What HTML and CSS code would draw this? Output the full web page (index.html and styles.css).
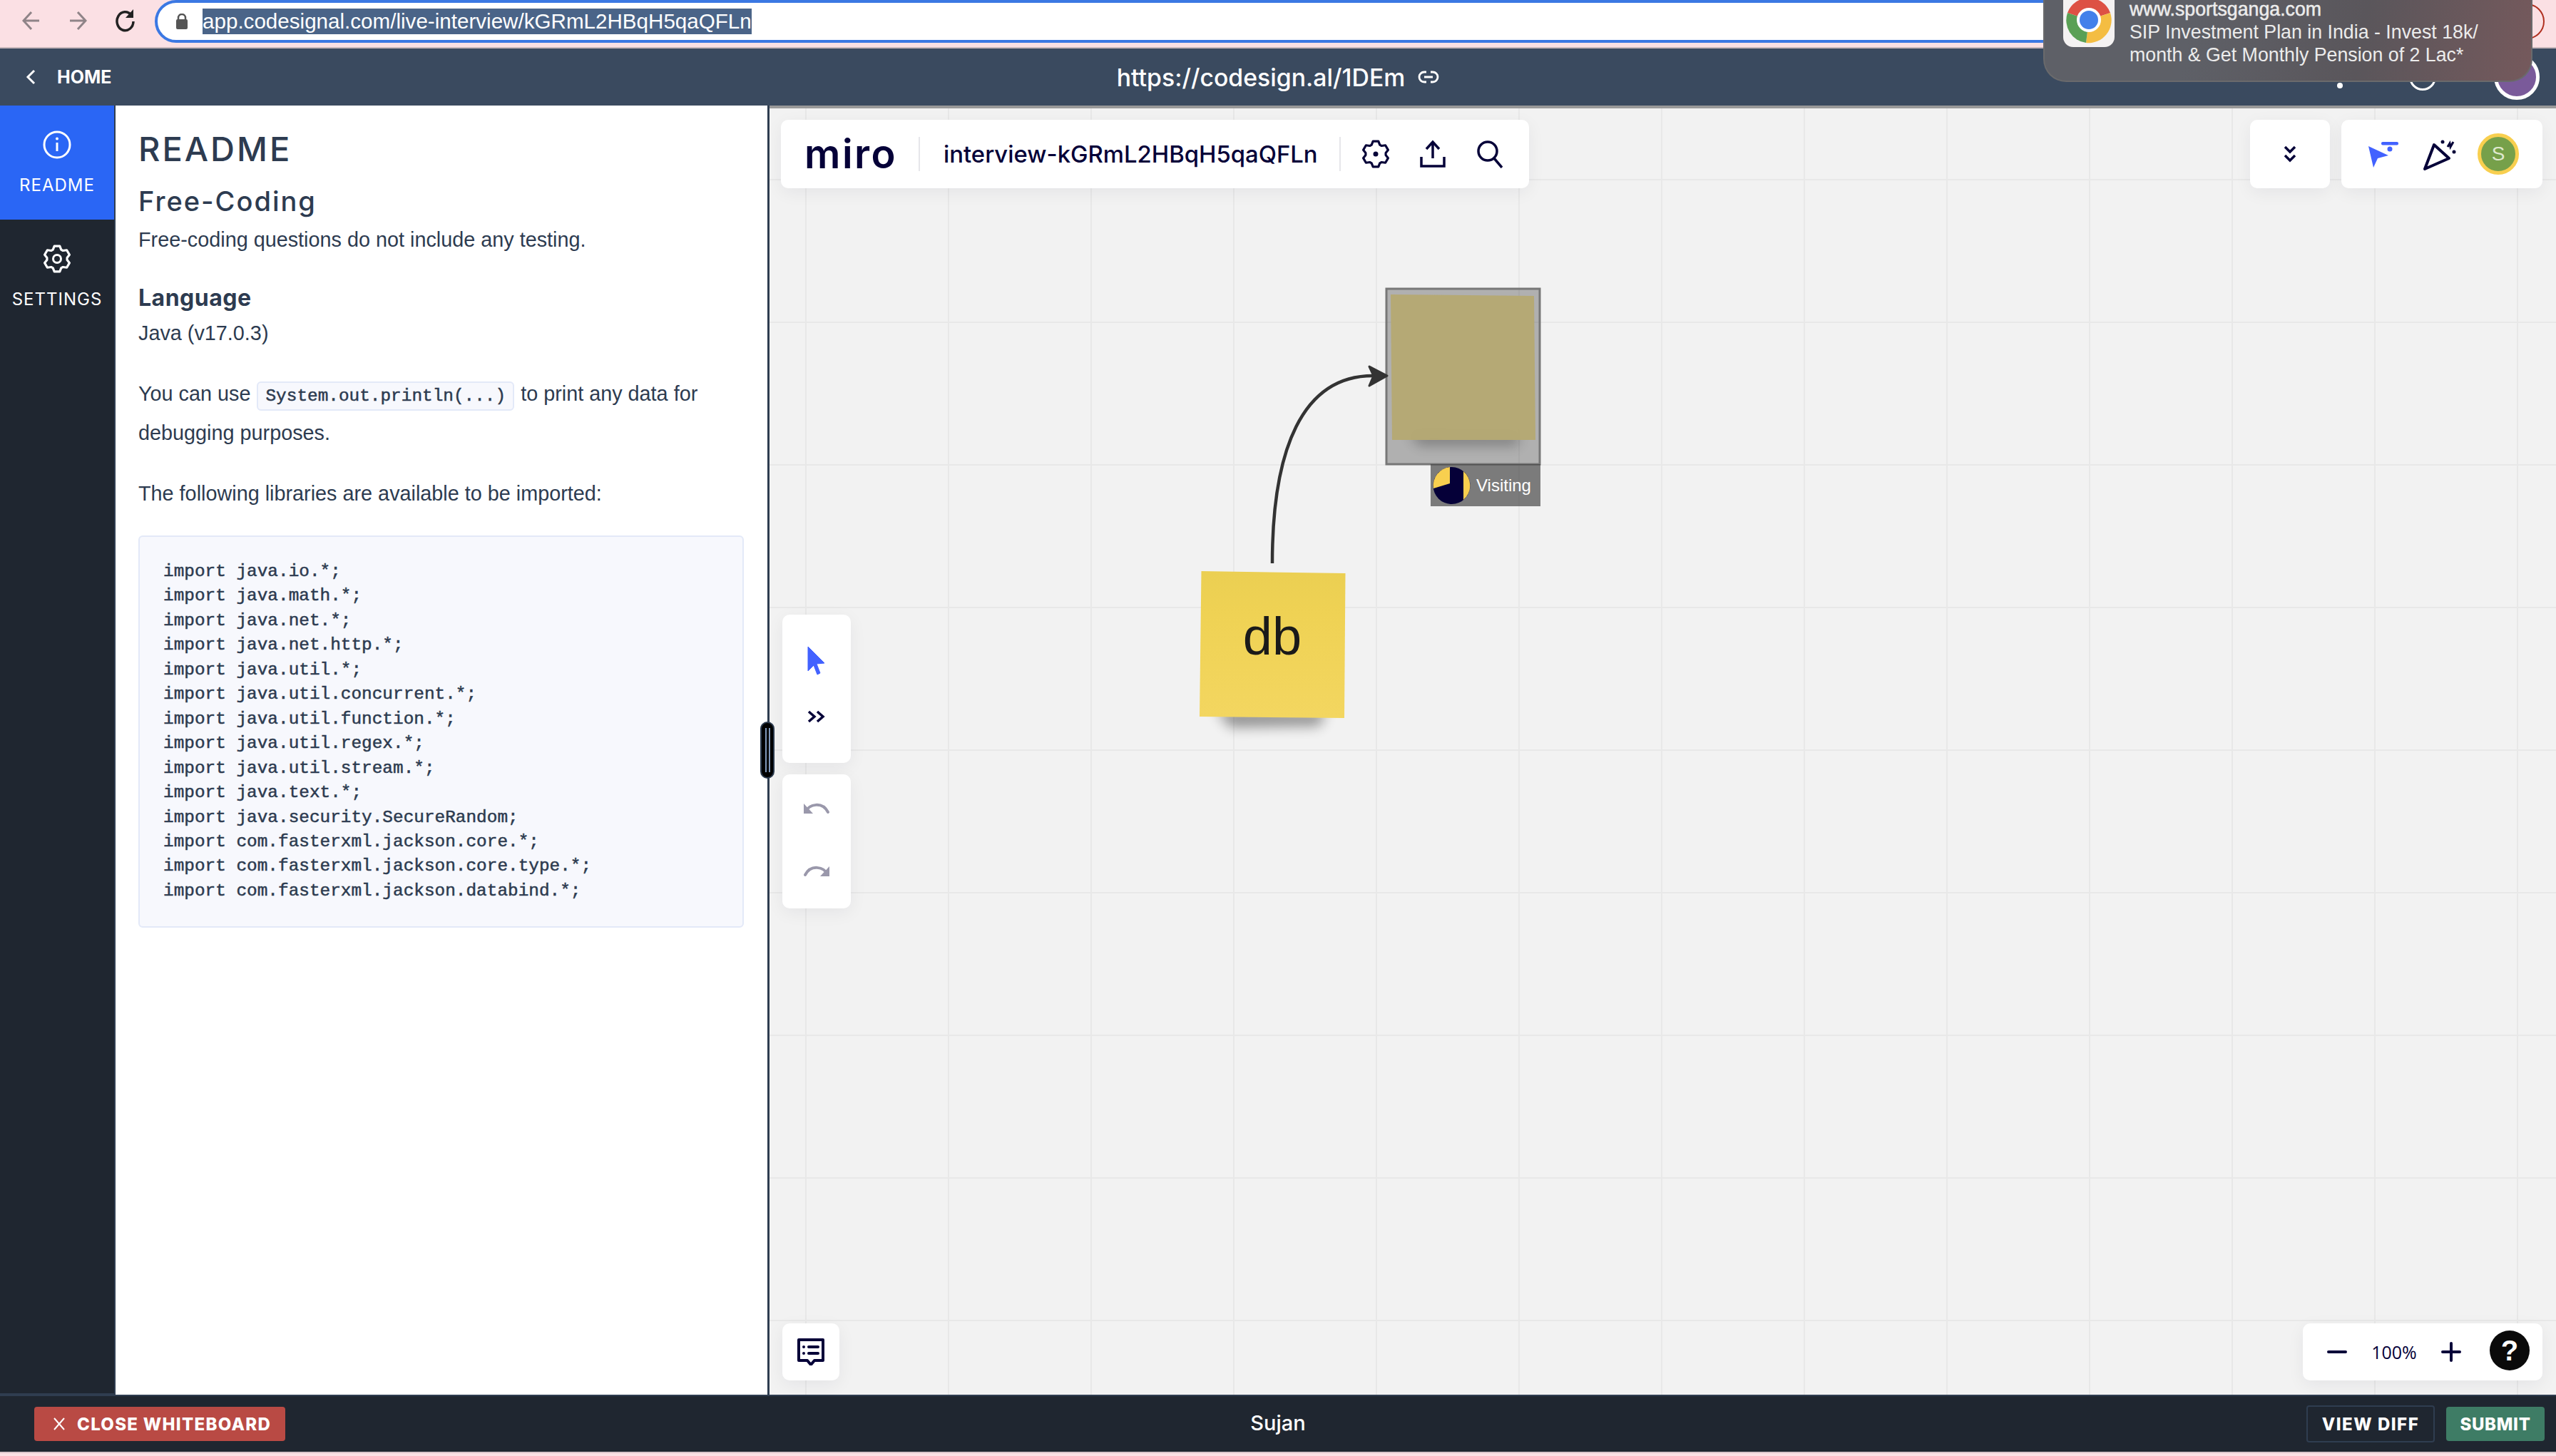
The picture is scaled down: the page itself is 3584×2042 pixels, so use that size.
FILE: index.html
```html
<!DOCTYPE html>
<html lang="en">
<head>
    <meta charset="UTF-8">
    <title>CodeSignal live interview</title>
    <link rel="stylesheet" href="styles.css">
</head>
<body>

    <svg class="defs">
        <symbol id="gear" viewBox="0 0 24 24">
            <polygon points="8.54,4.23 9.71,1.24 14.29,1.24 15.46,4.23 17,5.12 20.17,4.64 22.46,8.6 20.45,11.11 20.45,12.89 22.46,15.4 20.17,19.36 17,18.88 15.46,19.77 14.29,22.76 9.71,22.76 8.54,19.77 7,18.88 3.83,19.36 1.54,15.4 3.55,12.89 3.55,11.11 1.54,8.6 3.83,4.64 7,5.12" fill="none" stroke="currentColor" stroke-width="1.9" stroke-linejoin="round"/>
        </symbol>
    </svg>

    <!-- browser toolbar -->
    <div class="browser-bar">
        <svg class="nav-icon" width="26" height="36" viewBox="0 0 26 36"><path d="M24 18H3M13 6L2 18l11 12" fill="none" stroke="#8f8488" stroke-width="3"/></svg>
        <svg class="nav-icon" width="26" height="36" viewBox="0 0 26 36"><path d="M2 18h21M13 6l11 12-11 12" fill="none" stroke="#8f8488" stroke-width="3"/></svg>
        <svg class="nav-icon" width="28" height="38" viewBox="0 0 28 38"><path d="M23 10a11.500 13 0 1 0 3 9" fill="none" stroke="#222" stroke-width="3.500"/><path d="M26 2v12H15z" fill="#222"/></svg>
        <div class="url-box">
            <svg width="18" height="22" viewBox="0 0 18 22"><path d="M4 9V6a5 5 0 0 1 10 0v3" fill="none" stroke="#555" stroke-width="2.500"/><rect x="1" y="8" width="16" height="14" rx="2" fill="#555"/></svg>
            <span class="url-selected">app.codesignal.com/live-interview/kGRmL2HBqH5qaQFLn</span>
        </div>
        <div class="profile-ring"></div>
    </div>

    <!-- page header -->
    <header class="top-bar">
        <div class="home-link">
            <svg width="14" height="22" viewBox="0 0 14 22"><path d="M12 2L3 11l9 9" fill="none" stroke="#fff" stroke-width="3"/></svg>
            <span>HOME</span>
        </div>
        <div class="share-link">
            <span>https://codesign.al/1DEm</span>
            <svg width="30" height="18" viewBox="0 0 30 18"><path d="M12 2H9a7 7 0 0 0 0 14h3M18 2h3a7 7 0 0 1 0 14h-3M9 9h12" fill="none" stroke="#fff" stroke-width="2.800"/></svg>
        </div>
        <div class="top-actions">
            <svg class="bell" width="30" height="60" viewBox="0 0 30 60"><path d="M15 8a10 10 0 0 0-10 10v20l-4 6h28l-4-6V18A10 10 0 0 0 15 8z" fill="#fff"/><circle cx="15" cy="51" r="4" fill="#fff"/></svg>
            <div class="info-dot"></div>
            <div class="user-dot"></div>
        </div>
    </header>

    <!-- ad notification -->
    <div class="notification">
        <svg class="chrome-icon" width="72" height="68" viewBox="0 0 72 68">
            <rect x="0" y="-14" width="72" height="82" rx="14" fill="#f4f2f2"/>
            <path d="M36 30L6 20A32 32 0 0 1 66 20z" fill="#dd5144"/>
            <path d="M36 30L66 20A32 32 0 0 1 32 62z" fill="#f4bd42"/>
            <path d="M36 30L32 62A32 32 0 0 1 6 20z" fill="#5aa055"/>
            <circle cx="36" cy="30" r="17" fill="#fff"/>
            <circle cx="36" cy="30" r="13" fill="#4380ea"/>
        </svg>
        <div class="notification-text">
            <div class="notification-site">www.sportsganga.com</div>
            <div>SIP Investment Plan in India - Invest 18k/</div>
            <div>month &amp; Get Monthly Pension of 2 Lac*</div>
        </div>
    </div>

    <main class="workspace">
        <nav class="side-nav">
            <div class="side-tab active">
                <svg width="40" height="40" viewBox="0 0 40 40"><circle cx="20" cy="20" r="18" fill="none" stroke="#fff" stroke-width="3"/><path d="M20 17v12" stroke="#fff" stroke-width="3"/><circle cx="20" cy="11.500" r="2" fill="#fff"/></svg>
                <span>README</span>
            </div>
            <div class="side-tab">
                <svg width="40" height="40" viewBox="0 0 40 40"><use href="#gear" width="40" height="40"/><circle cx="20" cy="20" r="5.500" fill="none" stroke="#fff" stroke-width="3"/></svg>
                <span>SETTINGS</span>
            </div>
        </nav>

        <section class="readme">
            <h1>README</h1>
            <h2>Free-Coding</h2>
            <p class="intro">Free-coding questions do not include any testing.</p>
            <h3>Language</h3>
            <p class="lang">Java (v17.0.3)</p>
            <p>You can use <code>System.out.println(...)</code> to print any data for<br>debugging purposes.</p>
            <p>The following libraries are available to be imported:</p>
<pre>import java.io.*;
import java.math.*;
import java.net.*;
import java.net.http.*;
import java.util.*;
import java.util.concurrent.*;
import java.util.function.*;
import java.util.regex.*;
import java.util.stream.*;
import java.text.*;
import java.security.SecureRandom;
import com.fasterxml.jackson.core.*;
import com.fasterxml.jackson.core.type.*;
import com.fasterxml.jackson.databind.*;</pre>
        </section>

        <section class="board">
            <!-- canvas items, same numbers as page coordinates -->
            <svg class="board-items" viewBox="1079 152 2505 1804">
                <defs>
                    <filter id="soft" x="-30%" y="-150%" width="160%" height="400%"><feGaussianBlur stdDeviation="9"/></filter>
                    <linearGradient id="stickyFill" x1="0" y1="0" x2="0" y2="1">
                        <stop offset="0" stop-color="#ebcf52"/>
                        <stop offset=".3" stop-color="#efd254"/>
                        <stop offset="1" stop-color="#f3d660"/>
                    </linearGradient>
                </defs>
                <rect x="1944" y="405" width="215" height="246" fill="rgba(0,0,0,.27)" stroke="#777" stroke-width="3"/>
                <polygon points="1975,606 2130,608 2128,624 1990,624" fill="#000" opacity=".3" filter="url(#soft)"/>
                <polygon points="1950,413 2151,415 2153,617 1952,617" fill="#b5a972" fill-opacity=".96"/>
                <rect x="2006" y="651" width="154" height="59" fill="rgba(60,60,60,.66)"/>
                <circle cx="2035.500" cy="681" r="26" fill="#050038"/>
                <path d="M2033 678L2010 685A26 26 0 0 1 2033 655z" fill="#f8cf4f"/>
                <path d="M2052 661A26 26 0 0 1 2052 701z" fill="#f8cf4f"/>
                <text class="visiting" x="2070" y="689">Visiting</text>

                <path d="M1784 790C1784 630 1826 527 1925 527" fill="none" stroke="#333" stroke-width="4.500"/>
                <path d="M1920 514L1945 527 1920 541 1926 527z" fill="#333" stroke="#333" stroke-width="3" stroke-linejoin="round"/>

                <polygon points="1705,995 1860,997 1850,1018 1725,1020" fill="#000" opacity=".4" filter="url(#soft)"/>
                <polygon points="1684.500,801 1886.500,804 1885,1007 1682,1005" fill="url(#stickyFill)"/>
                <text class="sticky-text" x="1784" y="918">db</text>
            </svg>

            <div class="panel top-left">
                <span class="miro-logo">miro</span>
                <div class="panel-title">interview-kGRmL2HBqH5qaQFLn</div>
                <svg class="tool-gear" width="40" height="40" viewBox="0 0 40 40"><use href="#gear" width="40" height="40"/><circle cx="20" cy="20" r="3.500" fill="#050038"/></svg>
                <svg width="36" height="40" viewBox="0 0 36 40"><path d="M18 26V5M9 13l9-10 9 10M2 24v13h32V24" fill="none" stroke="#050038" stroke-width="3.500"/></svg>
                <svg width="40" height="40" viewBox="0 0 40 40"><circle cx="17" cy="16" r="13" fill="none" stroke="#050038" stroke-width="3.500"/><path d="M26 26l11 13" stroke="#050038" stroke-width="3.500"/></svg>
            </div>

            <div class="top-right">
                <div class="panel collapse-btn">
                    <svg width="18" height="24" viewBox="0 0 18 24"><path d="M2 2l7 7 7-7M2 14l7 7 7-7" fill="none" stroke="#050038" stroke-width="3.500"/></svg>
                </div>
                <div class="panel collab-btns">
                    <svg width="48" height="40" viewBox="0 0 48 40"><polygon points="3,9 31,22 16,26 10,39" fill="#4262ff"/><rect x="21" y="3" width="24" height="4.500" rx="2" fill="#4262ff"/><circle cx="33" cy="13" r="3.500" fill="#4262ff"/></svg>
                    <svg width="50" height="47" viewBox="0 0 50 47"><path d="M3 44L16 10 37 29z" fill="none" stroke="#050038" stroke-width="4" stroke-linejoin="round"/><circle cx="28" cy="6" r="2.500" fill="#050038"/><circle cx="44" cy="20" r="2.500" fill="#050038"/><path d="M35 13l3-5 1 5 4-7" fill="none" stroke="#050038" stroke-width="3"/></svg>
                    <div class="me-avatar">S</div>
                </div>
            </div>

            <div class="side-tools">
                <div class="panel tool-stack tall">
                    <svg width="26" height="42" viewBox="0 0 26 42"><path d="M1 1L24 24 13 25 18 38 14 40 9 27 1 35z" fill="#4262ff" stroke="#4262ff" stroke-linejoin="round"/></svg>
                    <svg width="26" height="18" viewBox="0 0 26 18"><path d="M2 2l8 7-8 7M14 2l8 7-8 7" fill="none" stroke="#050038" stroke-width="3.500"/></svg>
                </div>
                <div class="panel tool-stack short">
                    <svg width="38" height="18" viewBox="0 0 38 18"><path d="M3 14C9 2 27-1 35 14" fill="none" stroke="#9a98ab" stroke-width="4" stroke-linecap="round"/><path d="M1 2v14h13z" fill="#9a98ab"/></svg>
                    <svg width="38" height="18" viewBox="0 0 38 18"><path d="M35 14C29 2 11-1 3 14" fill="none" stroke="#9a98ab" stroke-width="4" stroke-linecap="round"/><path d="M37 2v14H24z" fill="#9a98ab"/></svg>
                </div>
            </div>

            <div class="panel comment-btn">
                <svg width="40" height="38" viewBox="0 0 40 38"><path d="M3 2h34v29H25l-5 6-5-6H3z" fill="none" stroke="#050038" stroke-width="4" stroke-linejoin="round"/><circle cx="10" cy="12" r="2" fill="#050038"/><circle cx="10" cy="21" r="2" fill="#050038"/><rect x="15" y="10" width="17" height="4" rx="2" fill="#050038"/><rect x="15" y="19" width="17" height="4" rx="2" fill="#050038"/></svg>
            </div>

            <div class="panel zoom-box">
                <div class="zoom-sign"></div>
                <span class="zoom-value">100%</span>
                <div class="zoom-sign plus"></div>
                <div class="help-btn">?</div>
            </div>

            <div class="drag-handle"><i></i><i></i></div>
        </section>
    </main>

    <footer class="bottom-bar">
        <div class="bottom-left">
            <button class="btn btn-close"><svg width="18" height="18" viewBox="0 0 18 18"><path d="M2 1l14 16M16 1L2 17" stroke="#fff" stroke-width="2"/></svg>CLOSE WHITEBOARD</button>
        </div>
        <div class="candidate">Sujan</div>
        <div class="bottom-right">
            <button class="btn btn-diff">VIEW DIFF</button>
            <button class="btn btn-submit">SUBMIT</button>
        </div>
    </footer>
    <div class="bottom-strip"></div>

</body>
</html>
```
FILE: styles.css
```css
* {
    box-sizing: border-box;
}
html, body {
    margin: 0;
    height: 100%;
}
body {
    display: flex;
    flex-direction: column;
    height: 100vh;
    overflow: hidden;
    position: relative;
    font-family: "Liberation Sans", Arial, sans-serif;
    background-color: #fbe0e4;
    color: #2d3b50;
}
.defs {
    position: absolute;
    width: 0;
    height: 0;
}

/* browser toolbar */
.browser-bar {
    display: flex;
    align-items: flex-start;
    flex: 0 0 68px;
    padding-left: 31px;
    padding-right: 16px;
    background-color: #fbe0e4;
    border-bottom: 2px solid #c9b8bc;
}
.nav-icon {
    margin-top: 11px;
    margin-right: 39px;
}
.nav-icon:nth-child(3) {
    margin-right: 28px;
}
.url-box {
    display: flex;
    align-items: center;
    flex: 1;
    height: 60px;
    padding-left: 25px;
    gap: 20px;
    background-color: #fff;
    border: 4px solid #3b78e3;
    border-radius: 30px 0 0 30px;
}
.url-selected {
    height: 36px;
    line-height: 36px;
    font-size: 29.600px;
    background-color: #4a6488;
    color: #fff;
    white-space: nowrap;
}
.profile-ring {
    width: 50px;
    height: 50px;
    margin-top: 5px;
    border: 2px solid #b03020;
    border-radius: 50%;
}

/* header */
.top-bar {
    display: grid;
    grid-template-columns: 1fr auto 1fr;
    align-items: center;
    flex: 0 0 80px;
    background-color: #3a4a5f;
    color: #fff;
}
.home-link {
    display: flex;
    align-items: center;
    gap: 30px;
    padding-left: 36px;
    font-family: Inter, sans-serif;
    font-size: 25px;
    font-weight: 700;
}
.share-link {
    display: flex;
    align-items: center;
    gap: 18px;
    font-family: Inter, sans-serif;
    font-size: 33.800px;
    font-weight: 500;
}
.top-actions {
    display: flex;
    align-items: center;
    justify-content: flex-end;
    padding-right: 23px;
}
.bell {
    margin-right: 82px;
    margin-top: -18px;
}
.info-dot {
    width: 38px;
    height: 38px;
    margin-right: 81px;
    border: 3px solid #fff;
    border-radius: 50%;
}
.user-dot {
    width: 64px;
    height: 64px;
    background-color: #7a5a9a;
    border: 5px solid #fff;
    border-radius: 50%;
}

/* notification */
.notification {
    position: absolute;
    top: -6px;
    left: 2865px;
    width: 686px;
    height: 121px;
    display: flex;
    gap: 21px;
    padding: 0 0 0 26px;
    color: #ececec;
    font-size: 26.750px;
    line-height: 32px;
    background: linear-gradient(100deg, #5e6067 30%, #5a565b 65%, #75595c 100%);
    border: 2px solid #6a6a6c;
    border-top: 0;
    border-radius: 0 0 32px 32px;
}
.chrome-icon {
    flex: none;
    margin-top: 4px;
}
.notification-text {
    padding-top: 3px;
}
.notification-site {
    -webkit-text-stroke: 0.5px #ececec;
}

/* main area */
.workspace {
    display: flex;
    flex: 1;
    min-height: 0;
}
.side-nav {
    flex: 0 0 162px;
    background-color: #1f2630;
    border-right: 2px solid #2f3d50;
    border-bottom: 2px solid #2f3d50;
}
.side-tab {
    display: flex;
    flex-direction: column;
    align-items: center;
    height: 160px;
    padding-top: 35px;
    gap: 22px;
    color: #fff;
    font-family: Inter, sans-serif;
    font-size: 24px;
    letter-spacing: 1px;
}
.side-tab.active {
    background-color: #2a66f5;
}
.side-tab svg {
    color: #fff;
}

/* readme */
.readme {
    flex: 0 0 917px;
    padding: 33px 33px 0 32px;
    background-color: #fff;
    border-right: 3px solid #2f3d50;
    font-size: 28.800px;
    line-height: 55px;
}
.readme h1 {
    margin: 0;
    font-family: Inter, sans-serif;
    font-size: 47px;
    line-height: 56px;
    font-weight: 500;
    letter-spacing: 3px;
}
.readme h2 {
    margin: 20px 0 0;
    font-family: Inter, sans-serif;
    font-size: 38px;
    line-height: 50px;
    font-weight: 500;
    letter-spacing: 2px;
}
.readme h3 {
    margin: 34px 0 0;
    font-family: Inter, sans-serif;
    font-size: 32px;
    line-height: 40px;
    font-weight: 700;
    letter-spacing: 0.5px;
}
.readme p {
    margin: 30px 0 0;
}
.readme p.intro {
    margin-top: 2px;
}
.readme p.lang {
    margin-top: 2px;
}
code {
    margin: 0 1px;
    padding: 5px 10px;
    font-family: "Liberation Mono", monospace;
    font-size: 24.400px;
    line-height: 1;
    background-color: #f7f8fd;
    border: 2px solid #e3e9f8;
    border-radius: 6px;
    -webkit-text-stroke: 0.5px #2d3b50;
}
pre {
    margin: 31px 0 0;
    padding: 32px 33px;
    font-family: "Liberation Mono", monospace;
    font-size: 24.400px;
    line-height: 34.450px;
    background-color: #f7f8fd;
    border: 2px solid #e3e9f8;
    border-radius: 6px;
    -webkit-text-stroke: 0.5px #2d3b50;
}

/* whiteboard */
.board {
    position: relative;
    flex: 1;
    background-color: #f2f2f2;
    background-image:
        linear-gradient(#e8e8e8 2px, transparent 2px),
        linear-gradient(90deg, #e8e8e8 2px, transparent 2px);
    background-size: 200px 200px;
    background-position: 50px 99px;
    border-top: 4px solid #999;
}
.board-items {
    position: absolute;
    left: 0;
    top: 0;
    width: 100%;
    height: 100%;
}
.visiting {
    font-family: "Liberation Sans", sans-serif;
    font-size: 24px;
    fill: #fff;
}
.sticky-text {
    font-family: "Liberation Sans", sans-serif;
    font-size: 74px;
    text-anchor: middle;
    fill: #1a1a1a;
}
.panel {
    background-color: #fff;
    border-radius: 10px;
    box-shadow: 0 6px 24px rgba(5, 0, 56, 0.06);
    color: #050038;
}
.top-left {
    position: absolute;
    left: 16px;
    top: 16px;
    display: flex;
    align-items: center;
    width: 1049px;
    height: 96px;
    padding-left: 33px;
}
.miro-logo {
    flex: none;
    width: 160px;
    font-family: Inter, sans-serif;
    font-size: 56px;
    font-weight: 600;
    line-height: 56px;
    letter-spacing: 2.500px;
}
.panel-title {
    flex: none;
    width: 592px;
    height: 48px;
    margin-right: 29px;
    padding-left: 33px;
    line-height: 48px;
    font-family: Inter, sans-serif;
    font-size: 32.850px;
    font-weight: 500;
    border-left: 2px solid #e6e6ea;
    border-right: 2px solid #e6e6ea;
    white-space: nowrap;
}
.top-left svg {
    flex: none;
    margin-right: 42px;
}
.top-left svg:last-child {
    margin-right: 0;
}
.top-right {
    position: absolute;
    top: 16px;
    right: 19px;
    display: flex;
    gap: 16px;
}
.collapse-btn {
    display: flex;
    align-items: center;
    justify-content: center;
    width: 112px;
    height: 96px;
}
.collab-btns {
    display: flex;
    align-items: center;
    width: 282px;
    height: 96px;
    padding-left: 35px;
    gap: 31px;
}
.me-avatar {
    width: 58px;
    height: 58px;
    margin-left: -4px;
    line-height: 48px;
    text-align: center;
    font-size: 28px;
    color: #dfe8cf;
    background-color: #76a04a;
    border: 5px solid #f8cf4f;
    border-radius: 50%;
}
.side-tools {
    position: absolute;
    left: 18px;
    top: 710px;
    display: flex;
    flex-direction: column;
    gap: 16px;
    width: 96px;
}
.tool-stack {
    display: flex;
    flex-direction: column;
    align-items: center;
}
.tool-stack.tall {
    height: 208px;
    padding-top: 44px;
    gap: 48px;
}
.tool-stack.short {
    height: 188px;
    padding-top: 39px;
    gap: 70px;
}
.comment-btn {
    position: absolute;
    left: 18px;
    bottom: 20px;
    display: flex;
    align-items: center;
    justify-content: center;
    width: 80px;
    height: 80px;
}
.zoom-box {
    position: absolute;
    right: 19px;
    bottom: 20px;
    display: flex;
    align-items: center;
    width: 336px;
    height: 80px;
    padding-left: 34px;
}
.zoom-sign {
    position: relative;
    width: 28px;
    height: 4px;
    background-color: #050038;
    border-radius: 2px;
}
.zoom-sign.plus::after {
    content: "";
    position: absolute;
    left: 12px;
    top: -12px;
    width: 4px;
    height: 28px;
    background-color: #050038;
    border-radius: 2px;
}
.zoom-value {
    width: 132px;
    text-align: center;
    font-family: "Open Sans", sans-serif;
    font-size: 25px;
    font-weight: 500;
}
.help-btn {
    width: 56px;
    height: 56px;
    margin-left: 40px;
    margin-top: -4px;
    line-height: 56px;
    text-align: center;
    font-size: 40px;
    font-weight: 700;
    color: #fff;
    background-color: #0a0a0a;
    border-radius: 50%;
}
.drag-handle {
    position: absolute;
    left: -13px;
    top: 860px;
    display: flex;
    justify-content: center;
    gap: 3px;
    width: 20px;
    height: 80px;
    padding: 7px 0;
    background-color: #000;
    border: 2px solid #2b3a4d;
    border-radius: 10px;
}
.drag-handle i {
    width: 2px;
    background-color: #7f97b9;
}

/* bottom bar */
.bottom-bar {
    display: grid;
    grid-template-columns: 1fr auto 1fr;
    align-items: center;
    flex: 0 0 80px;
    background-color: #1f2630;
    border-top: 2px solid #2f3d50;
}
.bottom-left {
    padding-left: 48px;
}
.candidate {
    color: #fff;
    font-family: Inter, sans-serif;
    font-size: 29px;
    font-weight: 500;
    line-height: 1;
    margin-top: -3px;
}
.bottom-right {
    display: flex;
    justify-content: flex-end;
    align-items: center;
    gap: 16px;
    padding-right: 16px;
}
.btn {
    height: 48px;
    border: 0;
    border-radius: 4px;
    color: #fff;
    font-family: Inter, sans-serif;
    font-size: 24px;
    font-weight: 800;
}
.btn-close {
    display: flex;
    align-items: center;
    gap: 16px;
    width: 352px;
    padding-left: 26px;
    background-color: #b94a44;
    white-space: nowrap;
    letter-spacing: 1.300px;
}
.btn-diff {
    width: 180px;
    height: 52px;
    background-color: transparent;
    border: 2px solid #2f3d50;
    letter-spacing: 1.500px;
}
.btn-submit {
    width: 138px;
    background-color: #3e7c65;
    letter-spacing: 0.700px;
}
.bottom-strip {
    flex: 0 0 6px;
    background-color: #fbe0e4;
    border-top: 2px solid #d9c5ca;
}
```
